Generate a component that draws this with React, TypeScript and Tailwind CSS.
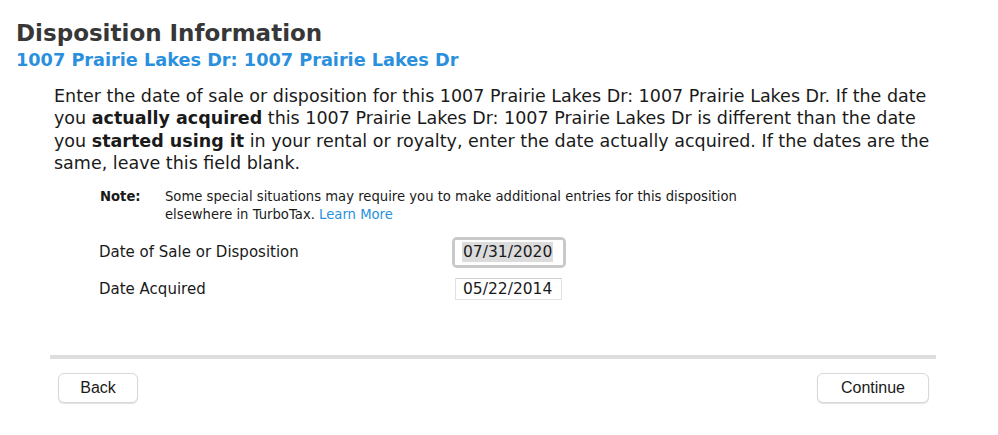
export default function App() {
  return (
    <div className="w-[998px] h-[435px] bg-white text-[#1a1a1a] overflow-hidden" style={{ fontFamily: '"DejaVu Sans", "Liberation Sans", sans-serif' }}>
      {/* Header */}
      <div className="pl-[16px] pt-[19px]">
        <h1 className="text-[23px] leading-[28px] font-bold text-[#373737]">Disposition Information</h1>
        <h2 className="text-[17.7px] leading-[22px] font-bold text-[#2a90de] mt-[2px]">1007 Prairie Lakes Dr: 1007 Prairie Lakes Dr</h2>
      </div>

      {/* Body */}
      <div className="pl-[54px] pr-[40px] pt-[14px]">
        <p className="text-[17.5px] leading-[22.4px] whitespace-nowrap">
          Enter the date of sale or disposition for this 1007 Prairie Lakes Dr: 1007 Prairie Lakes Dr. If the date
          <br />
          you <b>actually acquired</b> this 1007 Prairie Lakes Dr: 1007 Prairie Lakes Dr is different than the date
          <br />
          you <b>started using it</b> in your rental or royalty, enter the date actually acquired. If the dates are the
          <br />
          same, leave this field blank.
        </p>

        <div className="flex pl-[46px] pt-[13px] text-[13.2px] leading-[18px]">
          <span className="font-bold w-[65px] shrink-0">Note:</span>
          <span className="w-[600px]">
            Some special situations may require you to make additional entries for this disposition
            <br />
            elsewhere in TurboTax.{' '}
            <a className="text-[#2a90de]">Learn More</a>
          </span>
        </div>

        <div className="pl-[45px] pt-[13px] text-[15px]">
          <div className="flex items-center h-[31px]">
            <span className="w-[353px]">Date of Sale or Disposition</span>
            <div className="rounded-[5px] bg-[#c9c9c9] p-[3px]">
              <div className="bg-white w-[108px] h-[25px] flex items-center pl-[7px] rounded-[1px]">
                <span className="bg-[#dcdcdc] text-[15.5px] leading-[20px] px-[1px]">07/31/2020</span>
              </div>
            </div>
          </div>
          <div className="flex items-center h-[23px] mt-[10px]">
            <span className="w-[356px]">Date Acquired</span>
            <div className="bg-white w-[107px] h-[22px] flex items-center pl-[7px] border border-[#e2e2e2] border-t-[#cfcfcf] text-[15.5px]">
              05/22/2014
            </div>
          </div>
        </div>
      </div>

      {/* Footer */}
      <div className="mx-[50px] w-[886px] mt-[54px] h-[4px] bg-[#dddddd]" />
      <div className="flex justify-between pl-[58px] pr-[69px] pt-[14px]" style={{ fontFamily: '"Liberation Sans", Arial, sans-serif' }}>
        <button className="w-[80px] h-[30px] rounded-[6px] border border-[#d8d8d8] bg-white text-[16px] shadow-[0_1px_1px_rgba(0,0,0,0.12)]">Back</button>
        <button className="w-[112px] h-[30px] rounded-[6px] border border-[#d8d8d8] bg-white text-[16px] shadow-[0_1px_1px_rgba(0,0,0,0.12)]">Continue</button>
      </div>
    </div>
  );
}
